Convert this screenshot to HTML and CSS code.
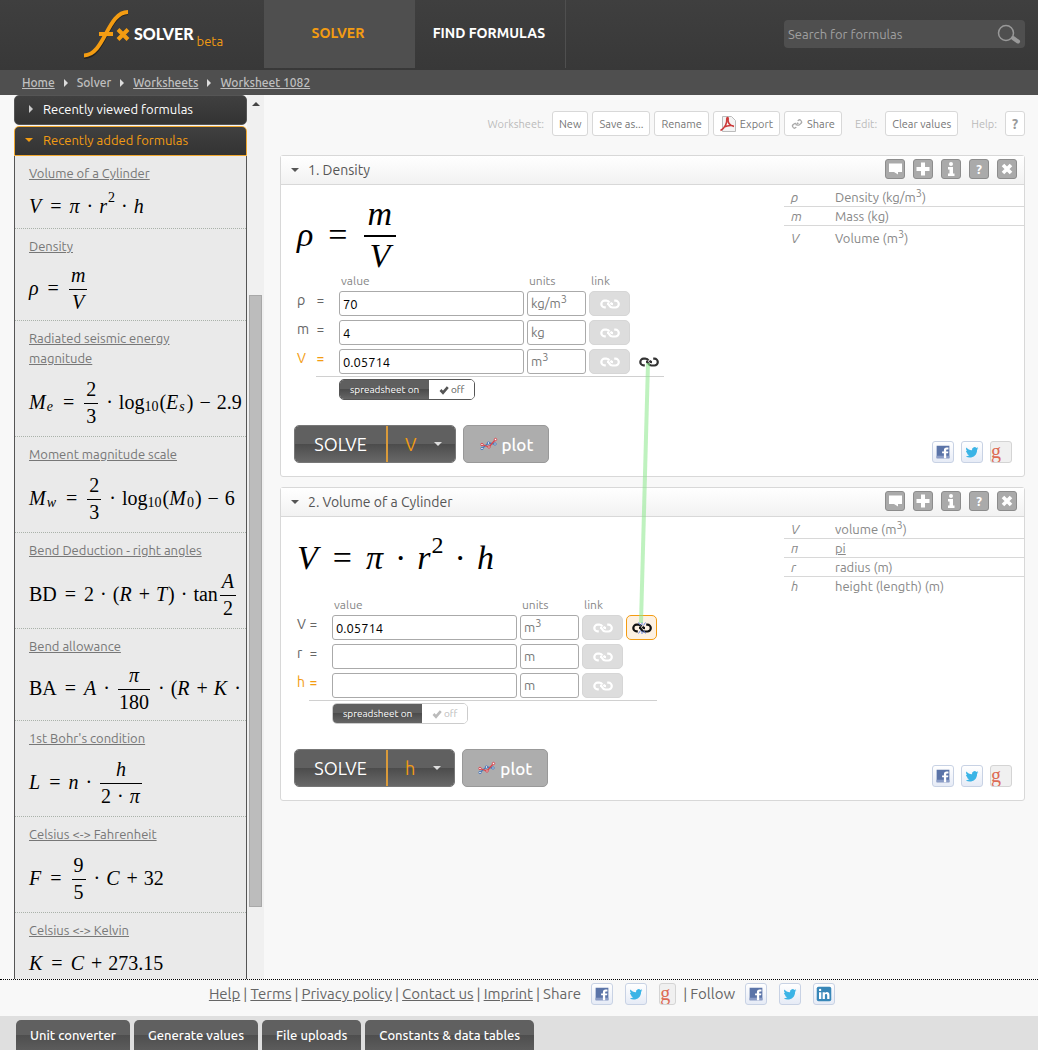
FILE: index.html
```html
<!DOCTYPE html>
<html lang="en">
<head>
<meta charset="utf-8">
<title>fxSolver - Worksheet 1082</title>
<link rel="stylesheet" href="styles.css">
</head>
<body>
<svg class="sprites" aria-hidden="true">
  <symbol id="chain" viewBox="0 0 20 10"><g fill="none" stroke="currentColor" stroke-width="2.200"><path d="M9.500 3.600C8.800 2.200 7.800 1.700 6.300 1.700H4.600a3.300 3.300 0 0 0 0 6.600H5.800"/><path d="M7 4.700C8.300 4.700 8.700 5.300 9.200 6.300C9.900 7.800 11 8.500 12.500 8.500h2.900a3.300 3.300 0 0 0 0-6.800H14.200"/><path d="M13 5.200C11.700 5.200 11.200 4.700 10.600 3.600"/></g></symbol>
  <symbol id="facebook" viewBox="0 0 22 22"><path fill="#5b74a8" d="M4 4h14v14H4z"/><path fill="#8a9cc6" d="M4 15h14v3H4z"/><path fill="#fff" d="M12 18v-5.500h-2v-2h2V9c0-2 1-3 3-3h2v2.200h-1.300c-.9 0-1.200.3-1.200 1.100v1.200h2.400l-.3 2h-2.100V18z"/></symbol>
  <symbol id="twitter" viewBox="0 0 22 22"><path fill="#3bb4e6" d="M18 6.900c-.5.200-1 .4-1.500.4.500-.3.900-.8 1.100-1.400-.5.300-1.100.5-1.700.6a2.900 2.900 0 0 0-4.900 2.500C8.600 9.100 6.200 7.800 4.800 6.100c-.7 1.200-.4 3 .9 3.900-.4 0-.8-.1-1.300-.3 0 1.400 1 2.500 2.300 2.700-.4.100-.8.100-1.300 0 .3 1.200 1.400 1.900 2.700 2A5.900 5.900 0 0 1 4 15.700c5.200 3.300 12.800.3 12.600-7.300.6-.4 1-.8 1.400-1.500z"/></symbol>
  <symbol id="linkedin" viewBox="0 0 22 22"><rect x="3" y="3" width="16" height="16" rx="2" fill="#3887b8"/><g fill="#fff"><circle cx="6.700" cy="6.500" r="1.300"/><path d="M5.500 9H8v7.500H5.500zM9.500 9H12v1c1.500-2 5-1.500 5 2v4.500h-2.500v-4c0-2-2.500-2-2.500 0v4H9.500z"/></g></symbol>
  <symbol id="plot" viewBox="0 0 18 14"><g fill="none" stroke-width="1.300"><path stroke="#4a78b8" d="M2 11.500 8.500 6 15 7" /><path stroke="#d8444c" d="M2 7.500 9 10 15.500 2.500"/></g><g fill="#fff" stroke-width="1"><g stroke="#4a78b8"><circle cx="2" cy="11.500" r="1.200"/><circle cx="8.500" cy="6" r="1.200"/><circle cx="15" cy="7" r="1.200"/></g><g stroke="#d8444c"><circle cx="2" cy="7.500" r="1.200"/><circle cx="9" cy="10" r="1.200"/><circle cx="15.500" cy="2.500" r="1.200"/></g></g></symbol>
  <symbol id="check" viewBox="0 0 10 10"><path fill="none" stroke="currentColor" stroke-width="2.600" d="M1.500 5 4 7.700 8.800 2.200"/></symbol>
  <symbol id="comment" viewBox="0 0 18 18"><path fill="#fff" d="M3 3.500h13v8.500H12v2.500L8 12H3z"/></symbol>
  <symbol id="plus" viewBox="0 0 18 18"><path fill="#fff" d="M7 2.500h4V7h4.500v4H11v4.500H7V11H2.500V7H7z"/></symbol>
  <symbol id="info" viewBox="0 0 18 18"><circle cx="9" cy="4" r="2" fill="#fff"/><path fill="#fff" d="M6 7h5v6.500h1.500v2.500H6v-2.500h1.500V9.500H6z"/></symbol>
  <symbol id="close" viewBox="0 0 18 18"><path fill="none" stroke="#fff" stroke-width="3.600" d="m5 5 8 8M13 5l-8 8"/></symbol>
</svg>

<header class="top">
  <a class="logo" href="#" aria-label="fx solver beta">
    <svg class="logo-mark" viewBox="0 0 48 50"><g fill="none" stroke="#222" stroke-width="4" transform="translate(0 1)"><path d="M1 47C22 47 24 3 45 3"/></g><g fill="none" stroke="#f39c12" stroke-width="4"><path d="M1 46.500C22 46 24 3 45 3"/><path d="M16 25h14" stroke-width="4"/><path d="m35 20.500 10 10M45 20.500l-10 10" stroke-width="4"/></g></svg>
    <span class="logo-name">SOLVER</span><span class="logo-beta">beta</span>
  </a>
  <nav class="mainnav"><a class="active" href="#">SOLVER</a><a href="#">FIND FORMULAS</a></nav>
  <form class="search">
    <input type="text" placeholder="Search for formulas" aria-label="Search for formulas">
    <button type="button" aria-label="Search"><svg viewBox="0 0 24 20"><circle cx="9" cy="9" r="7.500" fill="none" stroke="#999" stroke-width="1.500"/><path d="m16 14 5 3.500" stroke="#999" stroke-width="4" stroke-linecap="round"/></svg></button>
  </form>
</header>

<nav class="crumbs"><a href="#">Home</a><i></i><span>Solver</span><i></i><a href="#">Worksheets</a><i></i><a href="#">Worksheet 1082</a></nav>

<div class="middle">
  <aside class="sidebar">
    <div class="accordion">
      <button class="fold" type="button"><i class="tri-right"></i>Recently viewed formulas</button>
      <button class="fold open" type="button"><i class="tri-down"></i>Recently added formulas</button>
      <div class="formulas">
        <article><a href="#">Volume of a Cylinder</a>
          <div class="math"><var>V</var><b class="rel">=</b><var>π</var><b>·</b><var>r</var><sup>2</sup><b>·</b><var>h</var></div></article>
        <article><a href="#">Density</a>
          <div class="math mid"><var>ρ</var><b class="rel">=</b><span class="frac"><var>m</var><var>V</var></span></div></article>
        <article><a href="#">Radiated seismic energy magnitude</a>
          <div class="math tall"><var>M</var><sub><var>e</var></sub><b class="rel">=</b><span class="frac"><span>2</span><span>3</span></span><b>·</b><span>log</span><sub>10</sub><span>(</span><var>E</var><sub><var>s</var></sub><span>)</span><b>−</b><span>2.9</span></div></article>
        <article><a href="#">Moment magnitude scale</a>
          <div class="math tall"><var>M</var><sub><var>w</var></sub><b class="rel">=</b><span class="frac"><span>2</span><span>3</span></span><b>·</b><span>log</span><sub>10</sub><span>(</span><var>M</var><sub>0</sub><span>)</span><b>−</b><span>6</span></div></article>
        <article><a href="#">Bend Deduction - right angles</a>
          <div class="math tall"><span>BD</span><b class="rel">=</b><span>2</span><b>·</b><span>(</span><var>R</var><b>+</b><var>T</var><span>)</span><b>·</b><span>tan</span><span class="frac"><var>A</var><span>2</span></span></div></article>
        <article><a href="#">Bend allowance</a>
          <div class="math mid"><span>BA</span><b class="rel">=</b><var>A</var><b>·</b><span class="frac"><var>π</var><span>180</span></span><b>·</b><span>(</span><var>R</var><b>+</b><var>K</var><b>·</b></div></article>
        <article><a href="#">1st Bohr's condition</a>
          <div class="math tall"><var>L</var><b class="rel">=</b><var>n</var><b>·</b><span class="frac"><var>h</var><span>2<b>·</b><var>π</var></span></span></div></article>
        <article><a href="#">Celsius &lt;-&gt; Fahrenheit</a>
          <div class="math tall"><var>F</var><b class="rel">=</b><span class="frac"><span>9</span><span>5</span></span><b>·</b><var>C</var><b>+</b><span>32</span></div></article>
        <article><a href="#">Celsius &lt;-&gt; Kelvin</a>
          <div class="math"><var>K</var><b class="rel">=</b><var>C</var><b>+</b><span>273.15</span></div></article>
      </div>
    </div>
    <div class="scroll"><i class="up"></i><div class="thumb"></div></div>
  </aside>

  <main class="work">
    <div class="toolbar">
      <span>Worksheet:</span>
      <button type="button">New</button><button type="button">Save as...</button><button type="button">Rename</button>
      <button type="button"><svg class="pdf" viewBox="0 0 16 16"><path d="M2.500.5h9l4 4v11h-13z" fill="#f4f4f4" stroke="#bbb"/><path d="M.5 14.500C4 12.500 7 8 6.800 2.500c0-1.500 1.700-1.300 1.400.2C7.500 7 9 9.500 14 10.500M4 11c3-1.500 6-2 9.500-1.300" fill="none" stroke="#cc3a3a" stroke-width="1.500"/></svg>Export</button>
      <button type="button"><svg class="mini" viewBox="0 0 20 10"><use href="#chain"/></svg>Share</button>
      <span>Edit:</span><button type="button">Clear values</button>
      <span>Help:</span><button class="help" type="button">?</button>
    </div>

    <section class="panel">
      <header><i class="tri-down"></i><h2>1. Density</h2>
        <div class="tools"><button type="button" aria-label="Comment"><svg><use href="#comment"/></svg></button><button type="button" aria-label="Add"><svg><use href="#plus"/></svg></button><button type="button" aria-label="Info"><svg><use href="#info"/></svg></button><button type="button">?</button><button type="button" aria-label="Close"><svg><use href="#close"/></svg></button></div>
      </header>
      <div class="body">
        <div class="solver">
          <div class="math big high"><var>ρ</var><b class="rel">=</b><span class="frac"><var>m</var><var>V</var></span></div>
          <div class="values">
            <div class="grid wide">
              <span></span><small>value</small><small>units</small><small>link</small><span></span>
              <label for="d1">ρ<b>=</b></label><input id="d1" type="text" value="70"><button class="unit" type="button">kg/m<sup>3</sup></button><button class="link" type="button" aria-label="Link ρ"><svg><use href="#chain"/></svg></button><span></span>
              <label for="d2">m<b>=</b></label><input id="d2" type="text" value="4"><button class="unit" type="button">kg</button><button class="link" type="button" aria-label="Link m"><svg><use href="#chain"/></svg></button><span></span>
              <label class="target" for="d3">V<b>=</b></label><input id="d3" type="text" value="0.05714"><button class="unit" type="button">m<sup>3</sup></button><button class="link" type="button" aria-label="Link V"><svg><use href="#chain"/></svg></button><button class="joined" type="button" aria-label="Linked"><svg><use href="#chain"/></svg></button>
            </div>
            <div class="under"><div class="toggle"><button type="button">spreadsheet on</button><button type="button"><svg><use href="#check"/></svg>off</button></div></div>
          </div>
          <div class="actions"><div class="solve"><button type="button">SOLVE</button><button type="button">V<i class="tri-down"></i></button></div><button class="plot" type="button"><svg><use href="#plot"/></svg>plot</button></div>
        </div>
        <div class="side">
          <table><tr class="raised"><th>ρ</th><td>Density (kg/m<sup>3</sup>)</td></tr><tr><th>m</th><td>Mass (kg)</td></tr><tr class="raised"><th>V</th><td>Volume (m<sup>3</sup>)</td></tr></table>
          <div class="social"><a href="#" aria-label="Facebook"><svg><use href="#facebook"/></svg></a><a href="#" aria-label="Twitter"><svg><use href="#twitter"/></svg></a><a class="google" href="#">g</a></div>
        </div>
      </div>
    </section>

    <section class="panel">
      <header><i class="tri-down"></i><h2>2. Volume of a Cylinder</h2>
        <div class="tools"><button type="button" aria-label="Comment"><svg><use href="#comment"/></svg></button><button type="button" aria-label="Add"><svg><use href="#plus"/></svg></button><button type="button" aria-label="Info"><svg><use href="#info"/></svg></button><button type="button">?</button><button type="button" aria-label="Close"><svg><use href="#close"/></svg></button></div>
      </header>
      <div class="body">
        <div class="solver">
          <div class="math big"><var>V</var><b class="rel">=</b><var>π</var><b>·</b><var>r</var><sup>2</sup><b>·</b><var>h</var></div>
          <div class="values">
            <div class="grid">
              <span></span><small>value</small><small>units</small><small>link</small><span></span>
              <label for="c1">V<b>=</b></label><input id="c1" type="text" value="0.05714"><button class="unit" type="button">m<sup>3</sup></button><button class="link" type="button" aria-label="Link V"><svg><use href="#chain"/></svg></button><button class="joined hot" type="button" aria-label="Unlink"><svg viewBox="0 0 20 10"><use href="#chain"/><path d="m6.500-.5 2 3M13.500-.5l-2 3M6.500 10.500l2-3M13.500 10.500l-2-3M10-1v3M10 11V8" stroke="#6a86e0"/></svg></button>
              <label for="c2">r<b>=</b></label><input id="c2" type="text"><button class="unit" type="button">m</button><button class="link" type="button" aria-label="Link r"><svg><use href="#chain"/></svg></button><span></span>
              <label class="target" for="c3">h<b>=</b></label><input id="c3" type="text"><button class="unit" type="button">m</button><button class="link" type="button" aria-label="Link h"><svg><use href="#chain"/></svg></button><span></span>
            </div>
            <div class="under"><div class="toggle faded"><button type="button">spreadsheet on</button><button type="button"><svg><use href="#check"/></svg>off</button></div></div>
          </div>
          <div class="actions"><div class="solve"><button type="button">SOLVE</button><button type="button">h<i class="tri-down"></i></button></div><button class="plot" type="button"><svg><use href="#plot"/></svg>plot</button></div>
        </div>
        <div class="side">
          <table><tr class="raised"><th>V</th><td>volume (m<sup>3</sup>)</td></tr><tr><th>π</th><td><a href="#">pi</a></td></tr><tr><th>r</th><td>radius (m)</td></tr><tr><th>h</th><td>height (length) (m)</td></tr></table>
          <div class="social"><a href="#" aria-label="Facebook"><svg><use href="#facebook"/></svg></a><a href="#" aria-label="Twitter"><svg><use href="#twitter"/></svg></a><a class="google" href="#">g</a></div>
        </div>
      </div>
    </section>
    <svg class="wire" viewBox="0 0 16 264" aria-hidden="true"><path d="M10 2 3 262" stroke="#8be88b" stroke-opacity=".55" stroke-width="4"/></svg>
  </main>
</div>

<footer class="foot">
  <a href="#">Help</a>|<a href="#">Terms</a>|<a href="#">Privacy policy</a>|<a href="#">Contact us</a>|<a href="#">Imprint</a>|<span>Share</span>
  <div class="social"><a href="#" aria-label="Share on Facebook"><svg><use href="#facebook"/></svg></a><a href="#" aria-label="Share on Twitter"><svg><use href="#twitter"/></svg></a><a class="google narrow" href="#">g</a></div>
  |<span>Follow</span>
  <div class="social"><a href="#" aria-label="Facebook"><svg><use href="#facebook"/></svg></a><a href="#" aria-label="Twitter"><svg><use href="#twitter"/></svg></a><a href="#" aria-label="LinkedIn"><svg><use href="#linkedin"/></svg></a></div>
</footer>
<div class="dock"><button type="button">Unit converter</button><button type="button">Generate values</button><button type="button">File uploads</button><button type="button">Constants &amp; data tables</button></div>
</body>
</html>
```
FILE: styles.css
```css
* { box-sizing: border-box; }
body {
  margin: 0;
  height: 100vh;
  display: flex;
  flex-direction: column;
  background: #f8f8f8;
  color: #666;
  font-family: Ubuntu, "Noto Sans", sans-serif;
  font-size: 13px;
}
button, input { font: inherit; margin: 0; }
button { padding: 0; cursor: pointer; white-space: nowrap; }
a { color: inherit; }
.sprites { position: absolute; width: 0; height: 0; }

.tri-down, .tri-right { width: 0; height: 0; flex: none; }
.tri-down { border: 4px solid transparent; border-top-color: currentColor; border-bottom: 0; }
.tri-right { border: 4px solid transparent; border-left: 4px solid currentColor; border-right: 0; }

/* top bar */
.top { display: flex; height: 70px; flex: none; background: linear-gradient(#3f3f3f, #383838); }
.logo { width: 264px; padding-left: 83px; display: flex; align-items: flex-start; text-decoration: none; }
.logo-mark { width: 48px; height: 50px; margin-top: 9px; flex: none; }
.logo-name { margin: 24px 0 0 3px; font: 900 16px/20px Lato, sans-serif; color: #fff; }
.logo-beta { margin: 32px 0 0 3px; line-height: 18px; color: #f39c12; }
.mainnav { display: flex; height: 68px; }
.mainnav a {
  width: 151px; display: flex; align-items: center; justify-content: center; padding: 0 2px 2px 0;
  border-right: 1px solid #4f4f4f; color: #fff; font-size: 14px; font-weight: 700; text-decoration: none;
}
.mainnav .active { background: #4f4f4f; color: #f39c12; }
.search { display: flex; align-items: center; width: 241px; height: 28px; margin: 20px 13px 0 auto; padding: 0 4px; background: #4f4f4f; border-radius: 4px; }
.search input { flex: 1; min-width: 0; border: 0; padding: 0; background: none; color: #aaa; outline: 0; }
.search input::placeholder { color: #a0a0a0; opacity: 1; }
.search button { width: 24px; height: 20px; border: 0; background: none; }
.search svg { display: block; width: 24px; height: 20px; }

.crumbs { display: flex; align-items: center; gap: 9px; height: 25px; flex: none; padding-left: 22px; background: #4f4f4f; color: #c0c0c0; font-size: 12px; font-weight: 500; }
.crumbs i { width: 0; height: 0; border: 4px solid transparent; border-left-color: #ddd; border-right: 0; }

.middle { flex: 1; min-height: 0; display: flex; }

/* sidebar */
.sidebar { width: 250px; margin-left: 14px; flex: none; display: flex; }
.accordion { flex: 1; min-width: 0; display: flex; flex-direction: column; }
.fold {
  display: flex; align-items: center; gap: 10px; height: 30px; flex: none; padding: 0 10px 2px; margin-bottom: 1px;
  border: 1px solid #555; border-radius: 5px; background: linear-gradient(#404040, #333); color: #fff;
}
.fold .tri-right { margin-left: 4px; color: #ccc; }
.fold.open { color: #f39c12; border-color: #f0a830; border-radius: 5px 5px 0 0; margin: 0; }
.formulas { flex: 1; overflow: hidden; background: #eaeaea; border: solid #555; border-width: 0 1px; color: #000; }
.formulas article { padding: 7px 0 0 14px; border-bottom: 1px dotted #aab2aa; }
.formulas article > a { color: #777; line-height: 20px; display: inline-block; vertical-align: top; max-width: 180px; }
.scroll { width: 17px; background: #f0f0f0; padding: 7px 2px 72px; display: flex; flex-direction: column; }
.scroll .up { width: 0; height: 0; border: 4px solid transparent; border-bottom-color: #444; border-top: 0; align-self: center; }
.thumb { margin-top: auto; height: 76%; background: #bcbcbc; border: 1px solid #a8a8a8; }

/* formulas */
.math { display: flex; align-items: center; height: 45px; white-space: nowrap; font: 20px/24px "Liberation Serif", serif; color: #000; }
.math.tall { height: 68px; }
.math.mid { height: 64px; }
.math > * { flex: none; }
.math var { padding-right: 1px; }
.math b { font-weight: 400; margin: 0 6px; }
.math .rel { margin: 0 8px; }
.math sup, .math sub { font-size: 14px; line-height: 14px; }
.math sup { padding-bottom: 16px; }
.math sub { padding: 10px 1px 0 0; }
.frac { display: flex; flex-direction: column; align-items: center; margin: 0 2px; }
.frac > :first-child { align-self: stretch; text-align: center; border-bottom: 1px solid #000; padding: 0 2px 2px; }
.frac > :last-child { padding: 0 1px; }
.math.big { height: 82px; font-size: 34px; line-height: 38px; }
.math.big.high { height: 90px; padding-top: 10px; }
.big b { margin: 0 11px; }
.big .rel { margin: 0 14px; }
.big sup { font-size: 24px; line-height: 24px; padding-bottom: 26px; }
.big .frac > :first-child { border-bottom-width: 2px; padding: 0 4px 2px; }

/* worksheet */
.work { position: relative; flex: 1; min-width: 0; padding: 16px 13px 0 16px; }
.toolbar { display: flex; justify-content: flex-end; align-items: center; gap: 4px; height: 25px; margin-bottom: 19px; font-size: 11px; }
.toolbar span { color: #bbb; margin-left: 9px; margin-right: 4px; }
.toolbar button { height: 25px; padding: 0 6px; display: flex; align-items: center; gap: 4px; background: #fff; border: 1px solid #d8d8d8; border-radius: 3px; color: #777; }
.toolbar .help { width: 20px; padding: 0; justify-content: center; font-size: 14px; font-weight: 700; color: #999; }
.pdf { width: 16px; height: 16px; }
.mini { width: 12px; height: 10px; color: #aaa; transform: rotate(-40deg); }

.panel { background: #fff; border: 1px solid #d8d8d8; border-radius: 3px; margin-bottom: 10px; }
.panel > header { display: flex; align-items: center; height: 29px; padding: 0 7px 0 10px; border-bottom: 1px solid #d8d8d8; background: linear-gradient(#fff, #f2f2f2); color: #555; }
.panel h2 { margin: 0 0 0 9px; font-size: 14px; font-weight: 400; }
.tools { display: flex; gap: 8px; margin-left: auto; padding-bottom: 2px; }
.tools button { width: 20px; height: 20px; border: 1px solid #8c8c8c; border-radius: 3px; background: #aaa; color: #fff; font-size: 13px; line-height: 18px; font-weight: 700; }
.tools svg { display: block; width: 18px; height: 18px; }
.body { display: flex; justify-content: space-between; padding-bottom: 13px; }
.solver { padding-left: 13px; }
.solver .math { padding-left: 3px; }

.values { width: fit-content; padding-left: 3px; }
.grid { display: grid; grid-template-columns: 32px 185px 59px 41px 31px; gap: 4px 3px; }
.grid.wide { grid-template-columns: 39px 185px 59px 41px 31px; }
.grid small { font-size: 12px; line-height: 12px; padding-left: 2px; color: #888; }
.grid label { display: flex; justify-content: space-between; padding-right: 12px; line-height: 19px; font-size: 14px; }
.grid label b { font-size: 13px; font-weight: 400; }
.grid .target { color: #f39c12; }
.grid .target b { font-weight: 700; }
.grid input, .unit { height: 25px; width: 100%; border: 1px solid #aaa; border-radius: 3px; background: #fff; text-align: left; }
.grid input { padding: 1px 3px 0; color: #000; outline: 0; }
.unit { padding: 0 3px 2px; color: #777; line-height: 16px; }
.unit sup, td sup { font-size: 11px; line-height: 0; }
.link, .joined { height: 25px; border: 1px solid #d6d6d6; border-radius: 5px; background: #ddd; color: #fff; }
.joined { border-color: transparent; background: none; color: #333; }
.joined.hot { border-color: #f39c12; background: #fdf1e2; color: #111; }
.link svg, .joined svg { display: block; width: 20px; height: 10px; margin: auto; overflow: visible; }
.under { width: 348px; margin: 2px 0 0 auto; padding: 2px 0 0 23px; border-top: 1px solid #d0d0d0; }
.toggle { display: flex; width: 136px; height: 21px; border: 1px solid #555; border-radius: 5px; overflow: hidden; font-size: 10px; }
.toggle button { border: 0; height: 19px; }
.toggle button:first-child { flex: 2; background: linear-gradient(#5f5f5f 50%, #4c4c4c 50%, #666); color: #fff; }
.toggle button:last-child { flex: 1; display: flex; align-items: center; justify-content: center; gap: 2px; background: #fff; color: #555; }
.toggle svg { width: 10px; height: 10px; }
.toggle.faded { border-color: #ccc; }
.toggle.faded button:last-child { color: #bbb; }

.actions { display: flex; gap: 7px; margin-top: 25px; font-size: 18px; }
.solve { display: flex; height: 38px; border: 1px solid #777; border-radius: 5px; overflow: hidden; }
.solve button { border: 0; background: linear-gradient(#606060 50%, #4c4c4c 50%, #686868); color: #fff; }
.solve button:first-child { width: 91px; }
.solve button:last-child { display: flex; align-items: center; gap: 18px; padding: 0 13px 0 17px; border-left: 2px solid #d99a3a; color: #f39c12; }
.solve i { color: #ddd; }
.plot { width: 86px; height: 38px; display: flex; align-items: center; justify-content: center; gap: 4px; border: 1px solid #999; border-radius: 5px; background: #adadad; color: #fff; font-size: 17px; font-weight: 500; }
.plot svg { width: 18px; height: 14px; }

.side { width: 240px; display: flex; flex-direction: column; justify-content: space-between; }
.side table { width: 100%; border-collapse: collapse; line-height: 18px; color: #888; }
.side th { width: 48px; padding: 0 0 0 7px; font-weight: 400; font-style: italic; text-align: left; }
.side td { padding: 0 0 0 3px; }
.side .raised > * { padding-top: 3px; }
.side tr + tr { border-top: 1px solid #d8d8d8; }
.social { display: flex; gap: 7px; }
.side .social { justify-content: flex-end; padding-right: 12px; }
.social a { width: 22px; height: 22px; flex: none; border: 1px solid #c8d2e4; border-radius: 3px; background: linear-gradient(#fff, #e6ebf6); overflow: hidden; text-decoration: none; }
.social svg { display: block; width: 20px; height: 20px; }
.social .google { border-color: #d4d4d4; background: #f0f0f0; color: #dd6b55; font: 20px/18px "Liberation Serif", serif; }
.social .narrow { width: 17px; }

/* wire between the two linked variables */
.wire { position: absolute; left: 374px; top: 266px; width: 16px; height: 264px; pointer-events: none; }

/* footer */
.foot { display: flex; align-items: flex-start; justify-content: center; gap: 3px; height: 37px; flex: none; padding: 3px 0 0 10px; border-top: 1px dotted #000; font-size: 15px; line-height: 22px; background: #f8f8f8; }
.foot .social { gap: 12px; margin: 0 4px 0 7px; }
.dock { display: flex; align-items: flex-end; gap: 4px; height: 34px; flex: none; padding-left: 16px; background: #dfdfdf; }
.dock button { height: 30px; padding: 0 14px; border: 0; border-radius: 5px 5px 0 0; background: linear-gradient(#606060 50%, #4e4e4e 50%, #5c5c5c); color: #fff; font-size: 13px; font-weight: 500; }
```
